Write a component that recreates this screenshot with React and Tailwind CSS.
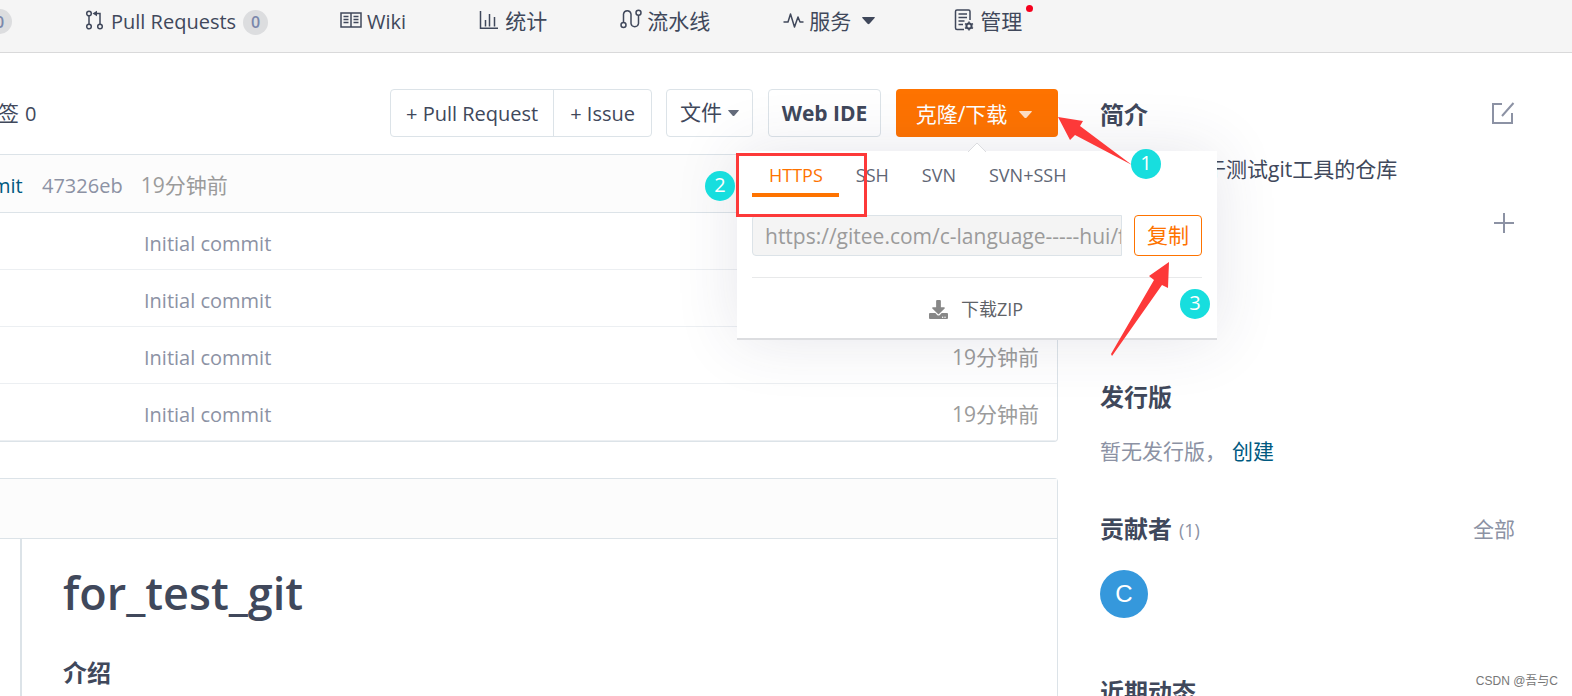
import clsx from 'clsx';
import { FaDownload } from 'react-icons/fa';

const files = [
    { id: 1, message: 'Initial commit', time: '19分钟前' },
    { id: 2, message: 'Initial commit', time: '19分钟前' },
    { id: 3, message: 'Initial commit', time: '19分钟前' },
    { id: 4, message: 'Initial commit', time: '19分钟前' },
];

const protocols = ['HTTPS', 'SSH', 'SVN', 'SVN+SSH'];

function Icon({ className, viewBox, children }) {
    return (
        <svg
            className={clsx('shrink-0', className)}
            viewBox={viewBox}
            fill="none"
            stroke="currentColor"
            strokeWidth="1.5"
            aria-hidden="true"
        >
            {children}
        </svg>
    );
}

function Caret({ className }) {
    return (
        <svg className={clsx('shrink-0', className)} viewBox="0 0 14 8" fill="currentColor" aria-hidden="true">
            <path d="M1 0h12q1.500 0 .6 1L8 7.300q-1 1-2 0L.4 1Q-.5 0 1 0z" />
        </svg>
    );
}

function NavLink({ icon, children, className }) {
    return (
        <a href="#" className={clsx('relative flex shrink-0 items-center', className)}>
            {icon}
            {children}
        </a>
    );
}

function CountBadge({ className }) {
    return (
        <span
            className={clsx(
                'flex h-[25px] w-[25px] shrink-0 items-center justify-center rounded-full bg-[#dcdddf] text-base font-semibold text-[#7a87ab]',
                className
            )}
        >
            0
        </span>
    );
}

function NavBar() {
    return (
        <nav className="flex h-[53px] items-start gap-[73px] overflow-hidden border-b border-[#d9d9da] bg-[#f5f5f5] pt-[5px] text-[21px] leading-8">
            <CountBadge className="mt-1 -ml-[13px]" />
            <NavLink
                className="gap-[7px] pt-px text-xl leading-8"
                icon={
                    <Icon viewBox="0 0 19 20" className="mb-[5px] h-[20px] w-[19px]">
                        <circle cx="4" cy="3.500" r="2.300" />
                        <circle cx="4" cy="16.500" r="2.300" />
                        <circle cx="15" cy="16.500" r="2.300" />
                        <path d="M4 6v8M15 14V3.500H10" />
                        <path d="M7.500 3.500 12 .8v5.400z" fill="currentColor" stroke="none" />
                    </Icon>
                }
            >
                Pull Requests
                <CountBadge />
            </NavLink>
            <NavLink
                className="-ml-px gap-[5px] pt-px text-xl leading-8"
                icon={
                    <Icon viewBox="0 0 22 16" className="mb-[5px] h-[16px] w-[22px]">
                        <path d="M1 1h20v14H1zM11 1v14" />
                        <path d="M3.500 4.500h5M3.500 7.500h5M3.500 10.500h5M13.500 4.500h5M13.500 7.500h5M13.500 10.500h5" />
                    </Icon>
                }
            >
                Wiki
            </NavLink>
            <NavLink
                className="gap-[6px]"
                icon={
                    <Icon viewBox="0 0 20 20" className="mb-[3px] h-[20px] w-[20px]">
                        <path d="M1.500 1v17.250H19M6.500 10v6.500M10.500 4v12.500M15.500 7v9.500" />
                    </Icon>
                }
            >
                统计
            </NavLink>
            <NavLink
                className="gap-[5px]"
                icon={
                    <Icon viewBox="0 0 22 20" className="mb-[4px] h-[20px] w-[22px]">
                        <circle cx="3.500" cy="16" r="2.500" />
                        <circle cx="18.500" cy="3.800" r="2.500" />
                        <path d="M3.500 13.500V5a3.800 3.800 0 0 1 7.500 0v9.500a3.800 3.800 0 0 0 7.500 0V6.300" />
                    </Icon>
                }
            >
                流水线
            </NavLink>
            <NavLink
                className="gap-[5px]"
                icon={
                    <Icon viewBox="0 0 21 18" className="mb-[3px] h-[18px] w-[21px]">
                        <path d="M.5 11H5l2.500-8 4 13 3.500-10 2 5h3.500" strokeLinejoin="round" />
                    </Icon>
                }
            >
                服务
                <Caret className="mx-[6px] w-[13px]" />
            </NavLink>
            <NavLink
                className="gap-[6px]"
                icon={
                    <Icon viewBox="0 0 20 22" className="mb-[3px] h-[22px] w-[20px]">
                        <path d="M10 20.500H3a1.500 1.500 0 0 1-1.500-1.500V2.500A1.500 1.500 0 0 1 3 1h11.500a1.500 1.500 0 0 1 1.500 1.500V11M4.500 5h8.500M4.500 8.500h8.500M4.500 12h6M4.500 15.500h4.500" />
                        <circle cx="15" cy="17" r="2.600" strokeWidth="2" />
                        <path d="M15 12.500v2M15 19.500v2M11 14.700l1.800 1M17.200 18.300l1.800 1M11 19.300l1.800-1M17.200 15.700l1.800-1" />
                    </Icon>
                }
            >
                管理
                <span className="absolute -right-[11px] top-0 h-[7px] w-[7px] rounded-full bg-[#f5001d]" />
            </NavLink>
        </nav>
    );
}

function StepBadge({ className, children }) {
    return (
        <span
            className={clsx(
                'absolute flex h-[30px] w-[30px] items-center justify-center rounded-full bg-[#17dede] pb-[2px] text-xl text-white',
                className
            )}
        >
            {children}
        </span>
    );
}

function Annotations() {
    return (
        <>
            <div className="pointer-events-none absolute -left-px top-[2px] h-[64px] w-[131px] border-3 border-[#fd3939]" />
            <svg
                className="pointer-events-none absolute -top-[51px] left-[303px] h-[270px] w-[140px]"
                viewBox="0 0 140 270"
                fill="#fd3939"
                aria-hidden="true"
            >
                <path d="M18 17l25 4-3 5 52 39-57-30-5 5z" />
                <path d="M129 162l-20 14 5 4-43 74 1 2 50-71 6 3z" />
            </svg>
            <StepBadge className="left-[394px] -top-[2px]">1</StepBadge>
            <StepBadge className="-left-[32px] top-[20px]">2</StepBadge>
            <StepBadge className="left-[443px] top-[138px]">3</StepBadge>
        </>
    );
}

function ClonePanel() {
    return (
        <div className="absolute left-1/2 top-[62px] z-10 w-[480px] -translate-x-1/2 border-b-2 border-[#dcdde0] bg-white px-[15px] shadow-[0_0_64px_rgba(50,50,90,0.12)]">
            <svg className="absolute -top-[9px] left-[231px] h-[10px] w-[18px]" viewBox="0 0 18 10" fill="#fff" aria-hidden="true">
                <path d="M0 10 9 1l9 9" stroke="#dcdde0" />
            </svg>
            <div role="tablist" className="flex pt-[8px]">
                {protocols.map((name, i) => (
                    <button
                        key={name}
                        type="button"
                        role="tab"
                        aria-selected={i === 0}
                        className={clsx(
                            'h-[38px] border-b-4 pr-[16px] pl-[17px] pb-[2px] text-lg leading-[32px]',
                            i === 0 ? 'border-[#fe7300] text-[#fe7300]' : 'border-transparent text-[#5f6674]'
                        )}
                    >
                        {name}
                    </button>
                ))}
            </div>
            <div className="mt-[18px] flex gap-3">
                <input
                    type="text"
                    readOnly
                    aria-label="HTTPS"
                    value="https://gitee.com/c-language-----hui/for_test_git.git"
                    className="h-[41px] min-w-0 flex-1 rounded-l-sm border border-[#dce3e8] bg-[#f4f4f4] pl-[12px] text-[21px] text-[#9b9b9b]"
                />
                <button type="button" className="h-[41px] w-[68px] rounded-sm border border-[#fe7300] text-[21px] leading-none text-[#fe7300]">
                    复制
                </button>
            </div>
            <a
                href="#"
                className="mt-[21px] flex h-[61px] items-center justify-center gap-[13px] border-t border-[#e8e9ea] pt-[2px] pr-[2px] text-lg text-[#5f6368]"
            >
                <FaDownload className="text-[#888]" size={19} />
                下载ZIP
            </a>
            <Annotations />
        </div>
    );
}

function Toolbar() {
    return (
        <div className="mb-[17px] flex h-[48px] text-xl">
            <a href="#" className="-ml-[2px] flex flex-1 items-center gap-[6px] pt-[2px]">
                <span className="text-[21px]">签</span>0
            </a>
            <div className="flex h-[48px] rounded border border-[#dce3e8] bg-white">
                <button type="button" className="border-r border-[#dce3e8] px-[15px] pt-[2px]">
                    + Pull Request
                </button>
                <button type="button" className="px-[16px] pt-[2px]">+ Issue</button>
            </div>
            <button type="button" className="ml-[14px] flex h-[48px] items-center gap-[6px] rounded-sm border border-[#dce3e8] px-[13px] text-[21px]">
                文件
                <Caret className="w-[11px] text-[#646b7b]" />
            </button>
            <button type="button" className="ml-[15px] h-[48px] w-[113px] rounded-sm border border-[#dce3e8] pt-[2px] text-[21px] font-bold">
                Web IDE
            </button>
            <div className="relative ml-[15px]">
                <button type="button" className="flex h-[48px] w-[162px] items-center justify-center gap-[12px] rounded-sm bg-[#fe7300] pt-[3px] pr-[6px] text-[21px] text-white">
                    克隆/下载
                    <Caret className="w-[13px] text-[#ffdfc4]" />
                </button>
                <ClonePanel />
            </div>
        </div>
    );
}

function FileList() {
    return (
        <section className="overflow-hidden rounded-r border border-l-0 border-[#dce3e8]">
            <div className="flex h-[58px] items-center border-b border-[#dce3e8] bg-[#fcfcfc] pt-[4px] text-xl text-[#8c92a4]">
                <a href="#" className="-ml-[8px] w-[50px] text-[#005980]">mit</a>
                <a href="#">47326eb</a>
                <span className="ml-[18px] text-[21px] text-[#9b9b9b]">19分钟前</span>
            </div>
            <table className="w-full border-separate border-spacing-0 text-xl text-[#8c92a4]">
                <tbody>
                    {files.map((file) => (
                        <tr key={file.id} className="h-[57px]">
                            <td className="w-[144px] border-b border-[#eceff2] p-0"></td>
                            <td className="border-b border-[#eceff2] p-0 pt-[5px]">{file.message}</td>
                            <td className="border-b border-[#eceff2] p-0 pt-[5px] pr-[18px] text-right text-[21px] text-[#9b9b9b]">
                                {file.time}
                            </td>
                        </tr>
                    ))}
                </tbody>
            </table>
        </section>
    );
}

function Readme() {
    return (
        <section className="mt-[36px] min-h-[260px] rounded-tr border border-b-0 border-l-0 border-[#dce3e8]">
            <div className="h-[60px] border-b border-[#dce3e8] bg-[#fcfcfc]"></div>
            <article className="ml-[20px] h-[200px] border-l-2 border-[#dce3e8] px-[41px] pt-[22px]">
                <h1 className="text-[45px] font-semibold leading-[64px]">for_test_git</h1>
                <h3 className="mt-[30px] text-2xl font-bold leading-9">介绍</h3>
            </article>
        </section>
    );
}

function SideHeading({ children }) {
    return <h2 className="text-2xl font-bold leading-9">{children}</h2>;
}

function Sidebar() {
    return (
        <aside className="w-[415px] shrink-0 pt-[8px] text-[21px] leading-8">
            <div className="flex items-center justify-between">
                <SideHeading>简介</SideHeading>
                <button type="button" aria-label="编辑" className="pb-1 text-[#8c92a4]">
                    <Icon viewBox="0 0 24 24" className="h-[24px] w-[24px]">
                        <path d="M11 3H2v19h19V12M11 15 22.500 2" strokeWidth="2" />
                    </Icon>
                </button>
            </div>
            <p className="mt-[20px]">这是一个用于测试git工具的仓库</p>
            <div className="mt-[28px] flex justify-end pr-px">
                <button type="button" aria-label="添加" className="text-[#8c92a4]">
                    <Icon viewBox="0 0 20 20" className="h-[20px] w-[20px]">
                        <path d="M10 0v20M0 10h20" strokeWidth="2" />
                    </Icon>
                </button>
            </div>

            <section className="mt-[146px]">
                <SideHeading>发行版</SideHeading>
                <p className="mt-[20px] text-[#8c92a4]">
                    暂无发行版，
                    <a href="#" className="ml-[6px] text-[#005980]">创建</a>
                </p>
            </section>

            <section className="mt-[44px]">
                <div className="flex items-center justify-between text-[#8c92a4]">
                    <div className="flex items-center gap-[7px]">
                        <span className="text-[#40485b]">
                            <SideHeading>贡献者</SideHeading>
                        </span>
                        <span className="pt-[2px] text-lg font-medium">(1)</span>
                    </div>
                    <a href="#">全部</a>
                </div>
                <a
                    href="#"
                    className="mt-[23px] flex h-[48px] w-[48px] items-center justify-center rounded-full bg-[#3598dc] font-['Liberation_Sans',sans-serif] text-[24px] text-white"
                >
                    C
                </a>
            </section>

            <section className="mt-[56px]">
                <SideHeading>近期动态</SideHeading>
            </section>
        </aside>
    );
}

export default function App() {
    return (
        <div className="relative h-screen overflow-hidden bg-white font-['Open_Sans','Noto_Sans_CJK_SC',sans-serif] text-[#40485b]">
            <NavBar />
            <div className="flex gap-[42px] pr-[57px] pt-[36px]">
                <main className="min-w-0 flex-1">
                    <Toolbar />
                    <FileList />
                    <Readme />
                </main>
                <Sidebar />
            </div>
            <span className="absolute bottom-[7px] right-[14px] font-['Liberation_Sans','Noto_Sans_CJK_SC',sans-serif] text-xs text-[#777]">
                CSDN @吾与C
            </span>
        </div>
    );
}
